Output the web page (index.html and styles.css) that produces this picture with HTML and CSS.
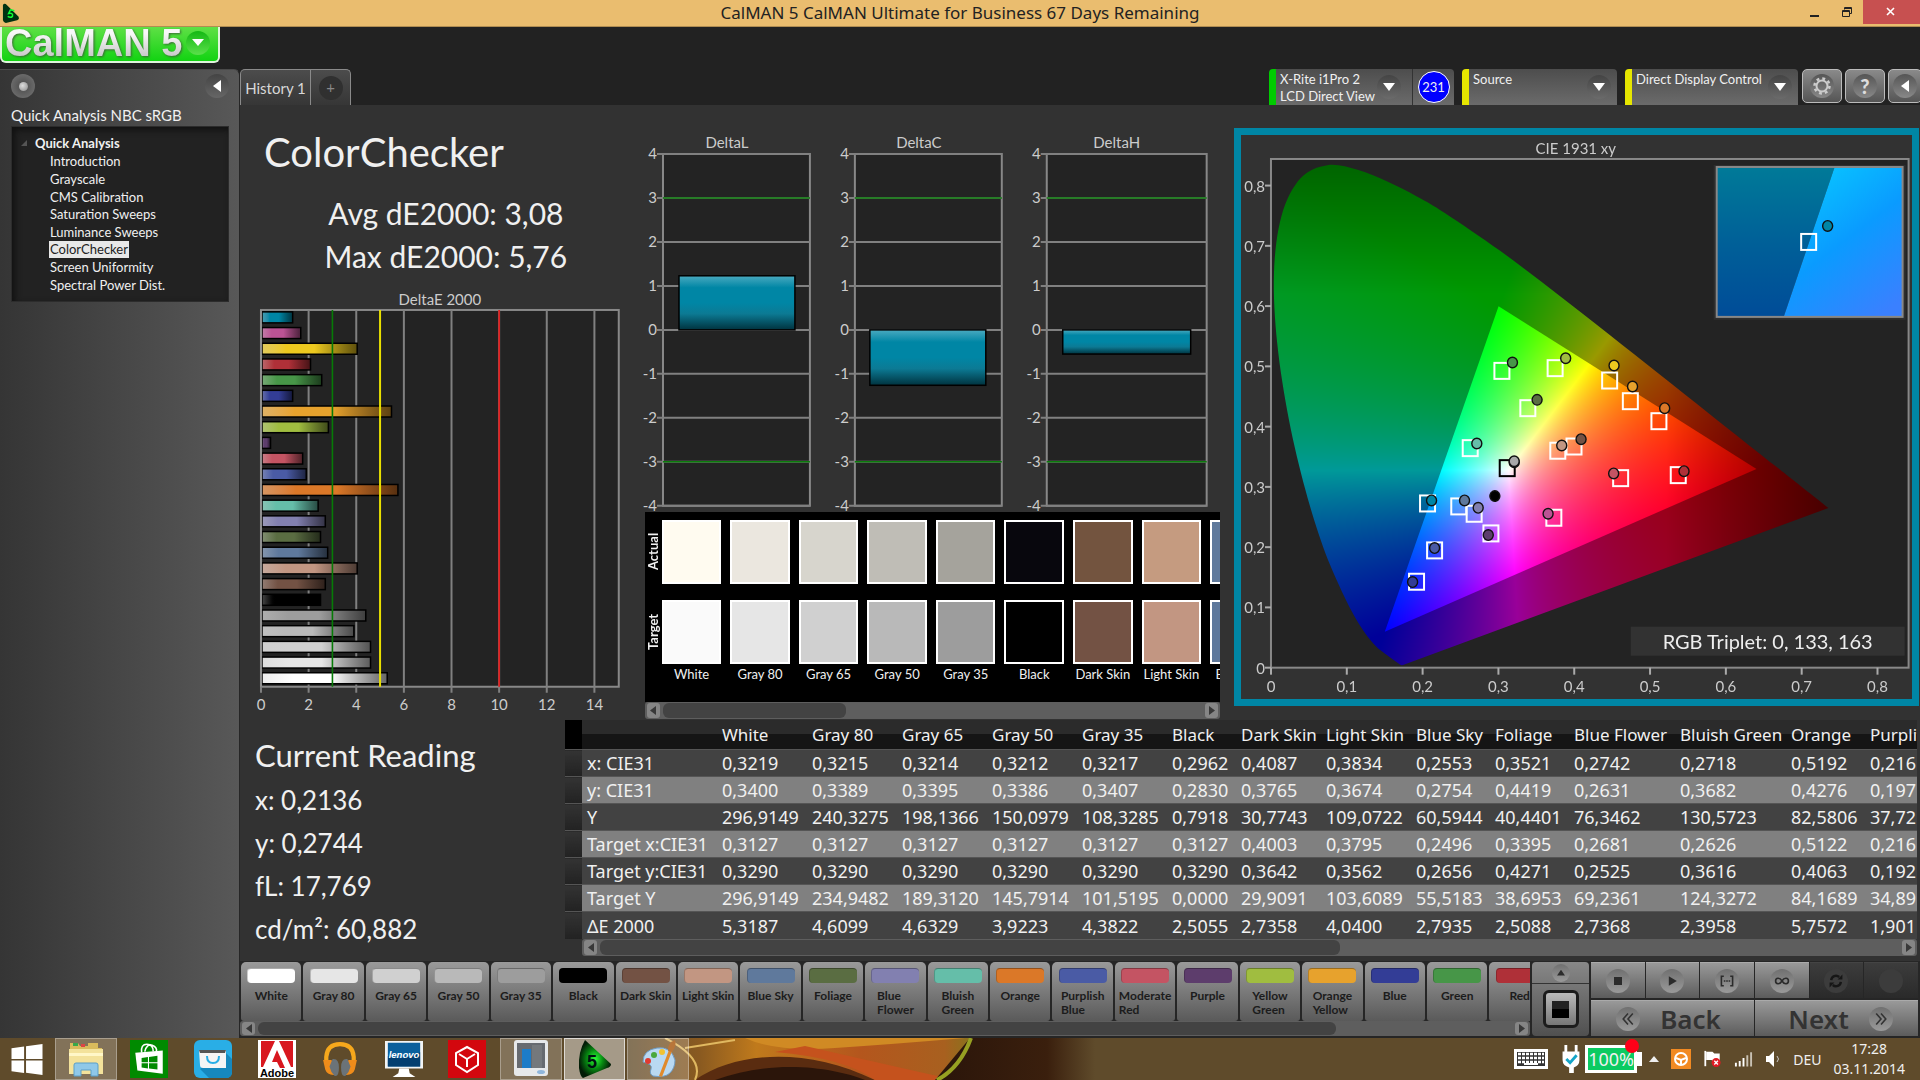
FILE: index.html
```html
<!DOCTYPE html>
<html lang="en">
<head>
<meta charset="utf-8">
<title>CalMAN 5</title>
<link rel="stylesheet" href="styles.css">
</head>
<body>
<header class="titlebar">
  <svg class="app-icon" viewBox="0 0 20 22"><path d="M1 2Q2 0 4 1L17 14Q19 17 16 18L4 21Q2 21 1 18Z" fill="#031"/><path d="M9 7L13 8M9 7L7 11Q12 10 11 14Q9 16 6 14" stroke="#1f3" stroke-width="1.6" fill="none"/></svg>
  <h1 class="window-title">CalMAN 5 CalMAN Ultimate for Business 67 Days Remaining</h1>
  <div class="window-buttons">
    <button class="win-btn" aria-label="Minimize"><svg viewBox="0 0 12 12"><path d="M1 9h9v2H1z" fill="#222"/></svg></button>
    <button class="win-btn" aria-label="Restore"><svg viewBox="0 0 12 12"><path d="M3.500 3.500V1.500h7v6h-2M1.500 4.500h7v6h-7z M1.500 5.500h7M3.500 2.500h7" stroke="#222" fill="none"/></svg></button>
    <button class="win-btn win-close" aria-label="Close"><svg viewBox="0 0 12 12"><path d="M2 2l7 7M9 2l-7 7" stroke="#fff" stroke-width="1.600"/></svg></button>
  </div>
</header>

<div class="brandbar">
  <button class="logo"><span class="logo-text">CalMAN 5</span><span class="logo-drop"><svg viewBox="0 0 12 8"><path d="M0 0h12L6 7z" fill="#fff"/></svg></span></button>
</div>

<div class="workspace">
  <aside class="sidebar">
    <div class="side-top">
      <button class="knob" aria-label="Record"><span class="knob-dot"></span></button>
      <button class="knob knob-dim" aria-label="Collapse"><svg viewBox="0 0 8 12"><path d="M8 0v12L0 6z" fill="#fff"/></svg></button>
    </div>
    <h2 class="side-title">Quick Analysis NBC sRGB</h2>
    <nav class="tree">
      <div class="tree-root"><svg viewBox="0 0 8 8"><path d="M8 0v8H0z" fill="#555"/></svg>Quick Analysis</div>
      <ul class="tree-list">
        <li><a href="#">Introduction</a></li>
        <li><a href="#">Grayscale</a></li>
        <li><a href="#">CMS Calibration</a></li>
        <li><a href="#">Saturation Sweeps</a></li>
        <li><a href="#">Luminance Sweeps</a></li>
        <li><a href="#" class="current">ColorChecker</a></li>
        <li><a href="#">Screen Uniformity</a></li>
        <li><a href="#">Spectral Power Dist.</a></li>
      </ul>
    </nav>
  </aside>

  <main class="main">
    <div class="toolbar">
      <div class="tabs">
        <button class="tab">History 1</button>
        <button class="tab tab-add" aria-label="Add history"><span>+</span></button>
      </div>
      <div class="devices">
        <button class="device green meter"><span class="device-text">X-Rite i1Pro 2<br>LCD Direct View</span><span class="drop"><svg viewBox="0 0 12 8"><path d="M0 0h12L6 8z" fill="#fff"/></svg></span><span class="count-cell"><span class="count">231</span></span></button>
        <button class="device source"><span class="device-text">Source</span><span class="drop"><svg viewBox="0 0 12 8"><path d="M0 0h12L6 8z" fill="#fff"/></svg></span></button>
        <button class="device display"><span class="device-text">Direct Display Control</span><span class="drop"><svg viewBox="0 0 12 8"><path d="M0 0h12L6 8z" fill="#fff"/></svg></span></button>
        <div class="tools">
          <button class="tool" aria-label="Settings"><span class="tool-disc"><svg viewBox="0 0 20 20"><circle cx="10" cy="10" r="5.500" fill="none" stroke="#ccc" stroke-width="2"/><circle cx="10" cy="10" r="7.500" fill="none" stroke="#ccc" stroke-width="2.500" stroke-dasharray="2.900 3"/></svg></span></button>
          <button class="tool" aria-label="Help"><span class="tool-disc">?</span></button>
          <button class="tool tool-cut" aria-label="Collapse panel"><span class="tool-disc"><svg class="tri" viewBox="0 0 8 12"><path d="M8 0v12L0 6z" fill="#fff"/></svg></span></button>
        </div>
      </div>
    </div>

    <div class="content">
      <section class="summary">
        <h2>ColorChecker</h2>
        <p class="stat">Avg dE2000: 3,08</p>
        <p class="stat">Max dE2000: 5,76</p>
        <svg id="delta-e" class="chart" viewBox="0 0 400 436"></svg>
      </section>

      <section class="middle">
        <svg id="deltas" class="chart" viewBox="0 0 595 384"></svg>
        <div class="compare">
          <div class="compare-body">
            <div class="compare-names"><span>Actual</span><span>Target</span></div>
            <div class="patches" id="patches"></div>
          </div>
          <div class="scrollbar">
            <button aria-label="Scroll left"><svg viewBox="0 0 8 12"><path d="M8 0v12L0 6z"/></svg></button>
            <div class="track"><div class="thumb" style="width:34%"></div></div>
            <button aria-label="Scroll right"><svg viewBox="0 0 8 12"><path d="M0 0v12L8 6z"/></svg></button>
          </div>
        </div>
      </section>

      <section class="cie">
        <canvas id="gamut" width="671" height="564"></canvas>
        <svg id="cie" class="chart" viewBox="0 0 671 564">
          <defs>
            <linearGradient id="ins-dim" x1="0" y1="0" x2="0" y2="1"><stop offset="0" stop-color="#007a98"/><stop offset=".5" stop-color="#006098"/><stop offset="1" stop-color="#004c98"/></linearGradient>
            <linearGradient id="ins-lit" x1=".2" y1="0" x2=".8" y2="1"><stop offset="0" stop-color="#08c8ff"/><stop offset=".5" stop-color="#0a9bff"/><stop offset="1" stop-color="#3a80ff"/></linearGradient>
          </defs>
        </svg>
      </section>
    </div>

    <div class="results">
      <section class="reading">
        <h2>Current Reading</h2>
        <p>x: 0,2136</p>
        <p>y: 0,2744</p>
        <p>fL: 17,769</p>
        <p>cd/m²: 60,882</p>
      </section>
      <div class="table-wrap">
        <div class="table-clip">
          <table class="data">
            <colgroup><col class="w-mark"><col class="w-label"><col class="w-gray"><col class="w-gray"><col class="w-gray"><col class="w-gray"><col class="w-gray"><col class="w-black"><col class="w-dark"><col class="w-gray"><col class="w-std"><col class="w-std"><col class="w-flower"><col class="w-bluish"><col class="w-std"><col class="w-gray"></colgroup>
            <thead><tr><th class="mark"></th><th></th><th>White</th><th>Gray 80</th><th>Gray 65</th><th>Gray 50</th><th>Gray 35</th><th>Black</th><th>Dark Skin</th><th>Light Skin</th><th>Blue Sky</th><th>Foliage</th><th>Blue Flower</th><th>Bluish Green</th><th>Orange</th><th>Purplish</th></tr></thead>
            <tbody>
            <tr><td class="mark"></td><th>x: CIE31</th><td>0,3219</td><td>0,3215</td><td>0,3214</td><td>0,3212</td><td>0,3217</td><td>0,2962</td><td>0,4087</td><td>0,3834</td><td>0,2553</td><td>0,3521</td><td>0,2742</td><td>0,2718</td><td>0,5192</td><td>0,216</td></tr>
            <tr><td class="mark"></td><th>y: CIE31</th><td>0,3400</td><td>0,3389</td><td>0,3395</td><td>0,3386</td><td>0,3407</td><td>0,2830</td><td>0,3765</td><td>0,3674</td><td>0,2754</td><td>0,4419</td><td>0,2631</td><td>0,3682</td><td>0,4276</td><td>0,197</td></tr>
            <tr><td class="mark"></td><th>Y</th><td>296,9149</td><td>240,3275</td><td>198,1366</td><td>150,0979</td><td>108,3285</td><td>0,7918</td><td>30,7743</td><td>109,0722</td><td>60,5944</td><td>40,4401</td><td>76,3462</td><td>130,5723</td><td>82,5806</td><td>37,72</td></tr>
            <tr><td class="mark"></td><th>Target x:CIE31</th><td>0,3127</td><td>0,3127</td><td>0,3127</td><td>0,3127</td><td>0,3127</td><td>0,3127</td><td>0,4003</td><td>0,3795</td><td>0,2496</td><td>0,3395</td><td>0,2681</td><td>0,2626</td><td>0,5122</td><td>0,216</td></tr>
            <tr><td class="mark"></td><th>Target y:CIE31</th><td>0,3290</td><td>0,3290</td><td>0,3290</td><td>0,3290</td><td>0,3290</td><td>0,3290</td><td>0,3642</td><td>0,3562</td><td>0,2656</td><td>0,4271</td><td>0,2525</td><td>0,3616</td><td>0,4063</td><td>0,192</td></tr>
            <tr><td class="mark"></td><th>Target Y</th><td>296,9149</td><td>234,9482</td><td>189,3120</td><td>145,7914</td><td>101,5195</td><td>0,0000</td><td>29,9091</td><td>103,6089</td><td>55,5183</td><td>38,6953</td><td>69,2361</td><td>124,3272</td><td>84,1689</td><td>34,89</td></tr>
            <tr><td class="mark"></td><th>ΔE 2000</th><td>5,3187</td><td>4,6099</td><td>4,6329</td><td>3,9223</td><td>4,3822</td><td>2,5055</td><td>2,7358</td><td>4,0400</td><td>2,7935</td><td>2,5088</td><td>2,7368</td><td>2,3958</td><td>5,7572</td><td>1,901</td></tr>
            </tbody>
          </table>
        </div>
        <div class="scrollbar table-scroll">
          <button aria-label="Scroll left"><svg viewBox="0 0 8 12"><path d="M8 0v12L0 6z"/></svg></button>
          <div class="track"><div class="thumb" style="width:57%"></div></div>
          <button aria-label="Scroll right"><svg viewBox="0 0 8 12"><path d="M0 0v12L8 6z"/></svg></button>
        </div>
      </div>
    </div>

    <footer class="dock">
      <div class="tiles-wrap">
        <div class="tiles" id="tiles"></div>
        <div class="scrollbar">
          <button aria-label="Scroll left"><svg viewBox="0 0 8 12"><path d="M8 0v12L0 6z"/></svg></button>
          <div class="track"><div class="thumb" style="width:86%"></div></div>
          <button aria-label="Scroll right"><svg viewBox="0 0 8 12"><path d="M0 0v12L8 6z"/></svg></button>
        </div>
      </div>
      <div class="pattern">
        <button class="up" aria-label="Expand"><span class="disc"><svg viewBox="0 0 20 20"><path d="M5 13h10l-5-7z"/></svg></span></button>
        <button class="window-size" aria-label="Pattern window"><span></span></button>
      </div>
      <div class="controls">
        <div class="transport">
          <button aria-label="Stop"><span class="disc"><svg viewBox="0 0 20 20"><path d="M5 5h10v10H5z"/></svg></span></button>
          <button aria-label="Read"><span class="disc"><svg viewBox="0 0 20 20"><path d="M6 4v12l10-6z"/></svg></span></button>
          <button aria-label="Read series"><span class="disc"><svg viewBox="0 0 20 20"><path d="M6 4H3v12h3M14 4h3v12h-3M6 10h2M9 10h2M12 10h2" fill="none" stroke="#2b2b2b" stroke-width="2"/></svg></span></button>
          <button aria-label="Read continuously"><span class="disc"><svg viewBox="0 0 20 20"><path d="M10 10C7 5 2 6 2 10s5 5 8 0s8-4 8 0s-5 5-8 0z" fill="none" stroke="#2b2b2b" stroke-width="2"/></svg></span></button>
          <button class="off" aria-label="Refresh"><span class="disc"><svg viewBox="0 0 20 20"><path d="M4 9a6 6 0 0 1 10-4M16 11a6 6 0 0 1-10 4" fill="none" stroke="#161616" stroke-width="3"/><path d="M12 8h6V2zM8 12H2v6z" fill="#161616"/></svg></span></button>
          <button class="off" aria-label="Unused"><span class="disc"></span></button>
        </div>
        <div class="steps">
          <button><span class="disc big"><svg viewBox="0 0 20 20"><path d="M10 3l-6 7 6 7M16 3l-6 7 6 7" fill="none" stroke="#333" stroke-width="2"/></svg></span>Back</button>
          <button class="next">Next<span class="disc big"><svg viewBox="0 0 20 20"><path d="M4 3l6 7-6 7M10 3l6 7-6 7" fill="none" stroke="#333" stroke-width="2"/></svg></span></button>
        </div>
      </div>
    </footer>
  </main>
</div>

<div class="taskbar">
  <svg class="wallpaper" viewBox="0 0 470 42" preserveAspectRatio="none">
    <defs>
      <linearGradient id="petal"><stop offset="0" stop-color="#5f4b2b"/><stop offset=".16" stop-color="#8a5a20"/><stop offset=".28" stop-color="#c07a1c"/><stop offset=".5" stop-color="#b4561d"/><stop offset=".68" stop-color="#a8601f"/><stop offset=".76" stop-color="#7d7a1c"/><stop offset=".8" stop-color="#47290f"/><stop offset="1" stop-color="#5f4b2b"/></linearGradient>
      <linearGradient id="dusk"><stop offset="0" stop-color="#2a150a"/><stop offset=".7" stop-color="#3a1f0d"/><stop offset="1" stop-color="#5f4b2b"/></linearGradient>
    </defs>
    <path d="M0 0h470v42H0z" fill="url(#petal)"/>
    <path d="M70 42C110 14 180 8 250 42z" fill="#5a2c10"/>
    <path d="M90 42C150 20 210 30 240 42z" fill="#2b150a"/>
    <path d="M120 0Q150 14 210 10T340 0z" fill="#d08a24"/>
    <path d="M180 8Q250 24 330 42H250Q220 20 150 14z" fill="#c5521d"/>
    <path d="M345 0L310 42H470V0z" fill="url(#dusk)"/>
    <path d="M346 0Q335 30 312 42" stroke="#97a022" stroke-width="4" fill="none"/>
    <path d="M40 0Q80 20 70 42M60 10L110 2" stroke="#e0b860" stroke-width="2" fill="none"/>
  </svg>
  <div class="apps">
    <button class="start" aria-label="Start"><svg viewBox="0 0 32 32"><path d="M0 4.500l13-2v13H0zM15 2.200L32 0v15.500H15zM0 17h13v13L0 28zM15 17h17v15l-17-2.300z" fill="#fff"/></svg></button>
    <div class="app-row">
    <button class="app open" aria-label="Explorer"><svg viewBox="0 0 38 36"><path d="M3 6V2h8l2 3h8V2h10v5h4v26H3z" fill="#d9bb5c"/><path d="M2 8h34v25H2z" fill="#f3e29b"/><path d="M2 12h34v3H2z" fill="#fff7c8"/><path d="M6 2h5v3H6z" fill="#38a84a"/><path d="M14 3h4v3h-4z" fill="#d44"/><path d="M7 35V24q0-2 2-2h20q2 0 2 2v11h-7v-6H14v6z" fill="#8fc8e8" stroke="#5a9fc8"/></svg></button>
    <button class="app" aria-label="Store"><svg viewBox="0 0 36 36"><path d="M0 0h36v36H0z" fill="#008a00"/><path d="M5 12l26-2v22L7 29z" fill="#fff"/><path d="M11 12Q10 4 16 4t6 7M14 11Q16 3 21 5t4 6" fill="none" stroke="#fff" stroke-width="1.500"/><path d="M11 17l6-1v5h-6zM18 16l8-1v6h-8zM11 22h6v5l-6-1zM18 22h8v6l-8-1z" fill="#008a00"/></svg></button>
    <button class="app" aria-label="Shop"><svg viewBox="0 0 38 38"><rect width="38" height="38" rx="6" fill="#29aee6"/><path d="M6 29L29 10l9 9v13q0 6-6 6H15z" fill="#1688bd"/><path d="M5 10h27v18H9q-3 0-3-3z" fill="#f5f5f5"/><path d="M5 10h27l-1 3H6z" fill="#555"/><path d="M13 16q0 7 6 7t6-7" fill="none" stroke="#29aee6" stroke-width="2"/></svg></button>
    <button class="app" aria-label="Adobe"><svg viewBox="0 0 38 38"><path d="M0 0h38v38H0z" fill="#fff"/><path d="M3 1h14L5 27H3zM21 1h14v26h-2zM19 10l8 18h-5l-3-6h-5z" fill="#d8171f"/><text x="19" y="37" text-anchor="middle" font-size="11" font-weight="700" font-family="Liberation Sans,sans-serif">Adobe</text></svg></button>
    <button class="app" aria-label="Music"><svg viewBox="0 0 36 36"><path d="M5 22V16Q6 4 18 4T31 16v6" fill="none" stroke="#f6a81c" stroke-width="4"/><path d="M2 19h8l4 14q-8 1-10-5zM34 19h-8l-4 14q8 1 10-5z" fill="#f08c1a"/><path d="M11 18q6-1 6 8t-4 8q-4-4-5-9zM25 18q-6-1-6 8t4 8q4-4 5-9z" fill="#6b7378"/></svg></button>
    <button class="app" aria-label="Lenovo"><svg viewBox="0 0 40 38"><path d="M0 0h40v29H0z" fill="#f2f4f5"/><path d="M3 2h34v25H3z" fill="#0a5f9c"/><path d="M3 16Q20 22 37 12v15H3z" fill="#033e70"/><path d="M15 29h10l1 5 6 4H8l6-4z" fill="#fff"/><text x="20" y="18" text-anchor="middle" font-size="10" font-style="italic" font-weight="700" fill="#fff" font-family="Liberation Sans,sans-serif">lenovo</text></svg></button>
    <button class="app" aria-label="Cube"><svg viewBox="0 0 38 38"><path d="M0 0h38v38H0z" fill="#d3070e"/><path d="M19 7l11 6v12l-11 7-11-7V13zM19 19v8M19 19l-8-5M19 19l8-5" fill="none" stroke="#fff" stroke-width="2"/></svg></button>
    <button class="app open" aria-label="Computer"><svg viewBox="0 0 36 38"><rect x="1" width="34" height="36" rx="3" fill="#e6e8ea"/><path d="M4 3h28v25H4z" fill="#666a70"/><path d="M9 9h9v19H9z" fill="#1c7cc8"/><path d="M19 5h10v23H19z" fill="#74787c"/><ellipse cx="28" cy="32" rx="4" ry="2" fill="#8fb6dc"/></svg></button>
    <button class="app active" aria-label="CalMAN"><svg viewBox="0 0 36 38"><defs><radialGradient id="glow"><stop offset="0" stop-color="#2dff36"/><stop offset=".5" stop-color="#078a12"/><stop offset="1" stop-color="#021c06"/></radialGradient></defs><path d="M8 0L34 24Q34 27 30 28L6 38Q3 36 2 28Q1 12 8 0z" fill="url(#glow)"/><text x="15" y="28" text-anchor="middle" font-size="18" font-weight="700" font-family="Liberation Sans,sans-serif" fill="#011">5</text></svg></button>
    <button class="app open" aria-label="Paint"><svg viewBox="0 0 38 38"><path d="M4 22Q4 10 18 8T36 20Q36 28 31 33T14 36Q10 34 12 29T4 22z" fill="#b9d9f2" stroke="#6e9cc4"/><circle cx="9" cy="21" r="3" fill="#e03a30"/><circle cx="15" cy="15" r="3" fill="#4aa83c"/><circle cx="23" cy="12" r="3" fill="#f1c232"/><path d="M20 36L30 10l3 1-10 26z" fill="#e08a2c"/><path d="M29 11Q28 3 36 0q2 6-3 12z" fill="#b8763a"/></svg></button>
    </div>
  </div>
  <div class="tray">
    <svg class="keyboard" viewBox="0 0 36 22"><path d="M1 1h34v20H1z" fill="#fff"/><path d="M4 4h28v14H4z" fill="#333"/><path d="M5 6h26M5 10h26M5 14h26" stroke="#fff" stroke-width="2.500" stroke-dasharray="3 1"/><path d="M11 16h14" stroke="#fff" stroke-width="2"/></svg>
    <svg class="plug" viewBox="0 0 20 32"><path d="M3 1h3v7h8V1h3v7h2v9q0 6-6 8v6H8v-6q-7-2-7-8V8h2z" fill="#fff"/><path d="M5 16l4 4 7-8" fill="none" stroke="#14a5c8" stroke-width="3"/></svg>
    <div class="battery"><span>100%</span></div>
    <svg class="chev" viewBox="0 0 10 6"><path d="M5 0l5 6H0z" fill="#eee"/></svg>
    <svg class="wheel" viewBox="0 0 20 20"><path d="M0 0h20v20H0z" fill="#f28a22"/><circle cx="10" cy="10" r="6" fill="none" stroke="#fff" stroke-width="2"/><path d="M5 9l5 2 5-2M10 11v5" stroke="#fff" stroke-width="2" fill="none"/></svg>
    <svg class="flag" viewBox="0 0 20 20"><path d="M2 1v17" stroke="#fff" stroke-width="2"/><path d="M3 2h7l2 2h6v9h-7l-2-2H3z" fill="#fff"/><circle cx="14" cy="14" r="5" fill="#e01b24"/><path d="M12 12l4 4M16 12l-4 4" stroke="#fff" stroke-width="1.500"/></svg>
    <svg class="signal" viewBox="0 0 20 16"><path d="M1 12h2v4H1zM5 10h2v6H5zM9 7h2v9H9z" fill="#fff"/><path d="M13 4h2v12h-2zM17 1h2v15h-2z" fill="#c9c1b3"/></svg>
    <svg class="speaker" viewBox="0 0 16 18"><path d="M1 6h3l5-5v16l-5-5H1z" fill="#fff"/><path d="M12 6q3 3 0 6" stroke="#ccc" fill="none"/></svg>
    <span class="lang">DEU</span>
    <div class="clock"><span>17:28</span><span>03.11.2014</span></div>
  </div>
</div>
<script src="charts.js"></script>
</body>
</html>
```
FILE: styles.css
```css
* { box-sizing: border-box; }
body { margin: 0; min-height: 100vh; display: flex; flex-direction: column; background: #222; color: #f0f0f0; font-family: Lato, "Noto Sans", sans-serif; font-size: 14px; overflow-x: hidden; }
button { font: inherit; color: inherit; border: 0; padding: 0; margin: 0; background: none; }
h1, h2, p, ul { margin: 0; padding: 0; font-weight: 400; }
svg { display: block; }

/* window frame */
.titlebar { height: 27px; display: flex; align-items: center; background: #eabd6f; border-bottom: 1px solid #b08d52; justify-content: space-between; padding-left: 2px; }
.app-icon { width: 19px; height: 21px; }
.window-title { font: 17px/28px "Noto Sans", sans-serif; color: #222; }
.window-buttons { display: flex; align-self: flex-start; }
.titlebar > .app-icon { margin-right: 100px; }
.win-btn { width: 32px; height: 24px; display: grid; place-items: center; }
.win-btn svg { width: 12px; height: 12px; }
.win-close { width: 57px; background: #c75050; }
.brandbar { height: 42px; background: #222; }
.logo { width: 220px; height: 36px; display: flex; align-items: center; justify-content: space-between; padding: 0 8px 2px 3px; border: 2px solid #dff5dc; border-top: 0; border-radius: 0 0 6px 6px; background: linear-gradient(#5fe046, #12d312); }
.logo-text { font: bold 38px/32px "Liberation Sans", sans-serif; background: linear-gradient(#f8f8f8 20%, #c4c4c4); -webkit-background-clip: text; background-clip: text; color: transparent; filter: drop-shadow(1px 1px 1px #3a6a35); }
.logo-drop { width: 24px; height: 24px; border-radius: 50%; display: grid; place-items: center; background: linear-gradient(#14b814, #5ae04a); }
.logo-drop svg { width: 12px; height: 8px; }

.workspace { flex: 1; display: flex; }
.sidebar { width: 240px; flex: none; padding: 4px 10px 0 11px; background: linear-gradient(90deg, #353535, #585858); border-right: 1px solid #262626; border-top: 1px solid #4a4a4a; border-top-right-radius: 6px; }
.side-top { display: flex; justify-content: space-between; }
.knob { width: 24px; height: 24px; border-radius: 50%; display: grid; place-items: center; background: radial-gradient(#4a4a4a, #777); }
.knob-dim { background: linear-gradient(#444, #666); }
.knob svg { width: 8px; height: 12px; }
.knob-dot { width: 9px; height: 9px; border-radius: 50%; background: radial-gradient(circle at 40% 40%, #ddd, #888); }
.side-title { font-size: 15px; line-height: 20px; margin: 7px 0 1px; white-space: nowrap; }
.tree { height: 176px; background: #222; border: 1px solid #2c2c2c; box-shadow: inset 3px 3px 6px #111; padding: 7px 0 0 9px; }
.tree-root { display: flex; align-items: center; gap: 8px; font-weight: 700; font-size: 13px; line-height: 18px; }
.tree-root svg { width: 6px; height: 6px; }
.tree-list { list-style: none; height: 141px; display: grid; grid-template-rows: repeat(8, 1fr); padding-left: 28px; margin-top: 1px; }
.tree-list li { display: flex; align-items: center; min-height: 0; }
.tree-list a { color: #f0f0f0; text-decoration: none; font-size: 13px; line-height: 17px; padding: 0 1px; }
.tree-list .current { background: #e8e8e8; color: #222; }

.main { flex: 1; min-width: 0; display: flex; flex-direction: column; background: #323232; }
.toolbar { height: 36px; display: flex; justify-content: space-between; background: #222; }
.tabs { display: flex; }
.tab { font-size: 15px; color: #d8d8d8; background: linear-gradient(#4c4c4c, #363636); border: 1px solid #8a8a8a; border-bottom: 0; border-radius: 5px 0 0 0; width: 71px; white-space: nowrap; }
.tab-add { width: 40px; border-left: 0; border-radius: 0 5px 0 0; display: grid; place-items: center; color: #888; }
.tab-add span { width: 24px; height: 24px; border-radius: 50%; background: #303030; line-height: 23px; }
.devices { display: flex; }
.device { display: flex; align-items: flex-start; text-align: left; line-height: 17px; background: linear-gradient(#4d4d4d, #6b6b6b); border-left: 7px solid #e6e600; border-radius: 4px 4px 0 0; padding-left: 4px; white-space: nowrap; }
.device.green { border-left-color: #0c0; }
.meter { width: 185px; margin-right: 8px; }
.source { width: 155px; margin-right: 8px; }
.display { width: 173px; margin-right: 4px; }
.device-text { flex: 1; padding-top: 2px; font-size: 13px; }
.drop { width: 24px; height: 24px; border-radius: 50%; display: grid; place-items: center; background: linear-gradient(#444, #6b6b6b); margin: 6px 6px 0 0; flex: none; }
.display .drop { margin-left: -4px; }
.drop svg { width: 12px; height: 8px; }
.count-cell { align-self: stretch; width: 42px; border-left: 1px solid #333; display: grid; place-items: center; margin-left: 5px; }
.count { width: 32px; height: 32px; border-radius: 50%; border: 1px solid #fff; background: #00f; font-size: 13px; line-height: 30px; text-align: center; }
.tools { display: flex; gap: 3px; width: 118px; overflow: hidden; }
.tool { width: 40px; height: 34px; flex: none; border: 1px solid #bbb; border-radius: 5px; background: linear-gradient(#8a8a8a, #555); display: grid; place-items: center; }
.tool-cut { width: 34px; }
.tool-disc { width: 24px; height: 24px; border-radius: 50%; background: linear-gradient(#555, #888); display: grid; place-items: center; font-size: 20px; line-height: 24px; font-weight: 900; color: #ddd; }
.tool-disc svg { width: 20px; height: 20px; }
.tool-disc .tri { width: 8px; height: 12px; }

.content { display: grid; grid-template-columns: 400fr 595fr 685fr; padding-right: 1px; }
.chart { width: 100%; height: auto; font-family: Lato, sans-serif; font-size: 15px; fill: #ccc; overflow: visible; }
.summary h2 { font-size: 40px; line-height: 46px; padding: 24px 0 0 24px; }
.stat { font-size: 30px; line-height: 43px; text-align: center; padding-left: 12px; }
.summary h2 + .stat { margin-top: 17px; }
.summary .chart { margin-top: 1px; }
.middle { padding-top: 23px; }
.compare { margin: 0 14px 0 5px; }
.compare-body { display: flex; background: #000; height: 190px; padding-top: 8px; }
.compare-names { width: 16px; display: flex; flex-direction: column; font-size: 13px; font-weight: 700; line-height: 16px; gap: 17px; }
.compare-names span { writing-mode: vertical-rl; transform: rotate(180deg); height: 63px; text-align: center; }
.patches { flex: 1; display: grid; grid-auto-flow: column; grid-auto-columns: 12.250%; overflow: hidden; align-content: start; }
.patch { text-align: center; font-size: 13px; white-space: nowrap; }
.patch i { display: block; height: 64px; border: 2px solid #fff; margin: 0 8px 16px 1px; }
.patch i + i { margin-bottom: 0; }
.patch span { display: block; margin: 0 -4px 0 -11px; line-height: 20px; }
.scrollbar { display: flex; align-items: center; height: 17px; background: #5e5e5e; gap: 3px; padding: 1px 2px; border-radius: 3px; }
.scrollbar button { width: 13px; align-self: stretch; background: #858585; border-radius: 3px; display: grid; place-items: center; flex: none; }
.scrollbar svg { width: 6px; height: 11px; fill: #383838; }
.track { flex: 1; align-self: stretch; }
.thumb { height: 100%; background: #434343; border-radius: 6px; }
.cie { position: relative; border: 7px solid #0086a5; margin-top: 23px; align-self: start; }
.cie canvas { position: absolute; inset: 0; width: 100%; height: 100%; }
.cie .chart { position: relative; }

.results { display: flex; padding-right: 3px; margin-top: 1px; }
.reading { width: 325px; flex: none; padding: 14px 0 0 15px; }
.reading h2 { font-size: 31px; line-height: 43px; }
.reading p { font-size: 26px; line-height: 43px; }
.reading h2 + p { margin-top: 2px; }
.table-wrap { flex: 1; min-width: 0; }
.table-clip { overflow: hidden; }
.data { table-layout: fixed; width: 1390px; border-collapse: collapse; font-family: "Noto Sans", sans-serif; font-size: 18px; text-align: left; }
.data th { font-weight: 400; }
.data th, .data td { padding: 0 0 0 5px; height: 27px; line-height: 26px; white-space: nowrap; border-top: 1px solid #555; }
.data thead th { height: 30px; font-size: 17px; line-height: 28px; border: 0; background: linear-gradient(#2b2b2b 50%, #151515 50%); }
.data tbody tr { background: #424242; }
.data tbody tr:nth-child(even) { background: #808080; }
.data .mark { background: linear-gradient(#333, #222); padding: 0; }
.data thead .mark { background: #000; }
.w-mark { width: 17px; } .w-label { width: 135px; } .w-gray { width: 90px; } .w-black { width: 69px; }
.w-dark { width: 85px; } .w-std { width: 79px; } .w-flower { width: 106px; } .w-bluish { width: 111px; }
.table-scroll { margin-left: 17px; }

.dock { display: flex; margin-top: auto; height: 77px; padding: 1px 2px 2px 0; background: #262626; gap: 2px; }
.tiles-wrap { flex: 1; min-width: 0; display: flex; flex-direction: column; justify-content: space-between; }
.tiles { display: grid; grid-auto-flow: column; grid-auto-columns: 4.840%; overflow: hidden; height: 59px; }
.tile { display: flex; flex-direction: column; align-items: center; gap: 6px; background: linear-gradient(#9a9a9a, #5a5a5a); border-radius: 5px 5px 3px 3px; margin: 0 1px; padding-top: 6px; color: #1c1c1c; font-weight: 700; font-size: 12px; line-height: 14px; text-align: left; }
.tile i { width: 48px; height: 15px; border-radius: 4px; border-top: 1px solid #0005; border-left: 1px solid #0003; }
.tile span { white-space: nowrap; }
.dock .scrollbar { height: 15px; }
.pattern { width: 57px; display: flex; flex-direction: column; border-radius: 4px; overflow: hidden; background: linear-gradient(#888, #505050); }
.up { height: 22px; border-bottom: 1px solid #333; display: grid; place-items: center; }
.disc { width: 24px; height: 24px; border-radius: 50%; display: grid; place-items: center; background: linear-gradient(#707070, #9a9a9a); }
.disc svg { width: 16px; height: 16px; fill: #2b2b2b; }
.up .disc { width: 18px; height: 18px; }
.window-size { width: 36px; height: 38px; margin: 6px auto; border: 3px solid #1c1c1c; border-radius: 6px; background: linear-gradient(#bbb, #777); display: grid; place-items: center; }
.window-size span { width: 17px; height: 17px; background: linear-gradient(#222 50%, #000 50%); }
.controls { width: 327px; display: flex; flex-direction: column; gap: 2px; }
.transport, .steps { flex: 1; display: grid; grid-template-columns: repeat(6, 1fr); gap: 1px; }
.transport button, .steps button { background: linear-gradient(#999, #5c5c5c); border-top: 1px solid #aaa; display: grid; place-items: center; }
.transport .off { background: linear-gradient(#3c3c3c, #2a2a2a); border-top-color: #444; }
.off .disc { background: #3c3c3c; }
.steps { grid-template-columns: 1fr 1fr; }
.steps button { display: flex; align-items: center; justify-content: center; gap: 20px; font: 600 26px/32px "Noto Sans", sans-serif; color: #333; padding-right: 8px; }
.steps .next { padding: 0 0 0 8px; }

.taskbar { height: 42px; display: flex; justify-content: space-between; background: #5f4b2b; position: relative; overflow: hidden; }
.wallpaper { position: absolute; left: 625px; width: 470px; height: 42px; }
.apps, .tray { position: relative; display: flex; align-items: center; }
.apps { gap: 2px; }
.app-row { display: grid; grid-template-columns: repeat(10, 1fr); column-gap: 2px; width: 634px; }
.start { width: 53px; display: grid; place-items: center; }
.start svg { width: 32px; height: 31px; }
.app { height: 42px; display: grid; place-items: center; border: 1px solid transparent; }
.app svg { width: 38px; height: 38px; }
.app.open { background: #ffffff38; border-color: #ffffff50; }
.app.active { background: #ffffff70; border-color: #ffffffa0; }
.tray { gap: 12px; padding-right: 15px; font-family: "Noto Sans", sans-serif; }
.keyboard { width: 36px; height: 22px; }
.plug { width: 20px; height: 30px; }
.battery { width: 52px; height: 28px; border: 3px solid #fff; background: #0bcb62; position: relative; font-size: 18px; line-height: 22px; text-align: center; margin-left: -8px; }
.battery::before { content: ""; position: absolute; right: -8px; top: 4px; width: 5px; height: 14px; background: #fff; }
.battery::after { content: ""; position: absolute; right: -5px; top: -9px; width: 14px; height: 14px; border-radius: 50%; background: #ff0018; }
.chev { width: 10px; height: 6px; }
.wheel { width: 20px; height: 20px; }
.flag, .signal { width: 19px; height: 18px; }
.speaker { width: 16px; height: 18px; }
.lang { font-size: 14px; }
.clock { display: flex; flex-direction: column; align-items: center; font-size: 14px; line-height: 20px; }
```
FILE: charts.js
```js
const NS = 'http://www.w3.org/2000/svg';
function add(parent, tag, attrs, text) {
  const el = document.createElementNS(NS, tag);
  for (const k in attrs) el.setAttribute(k, attrs[k]);
  if (text !== undefined) el.textContent = text;
  parent.appendChild(el);
  return el;
}
const line = (s, x1, y1, x2, y2, c, w) => add(s, 'path', { d: `M${x1} ${y1}L${x2} ${y2}`, stroke: c, 'stroke-width': w || 2, fill: 'none' });

const patches = [
  ['White', '#fafafa', '#fffbf0'], ['Gray 80', '#e6e6e6', '#ebe7df'], ['Gray 65', '#d0d0d0', '#d7d5cd'],
  ['Gray 50', '#b9b9b9', '#bfbdb6'], ['Gray 35', '#9d9d9d', '#a5a39c'], ['Black', '#000000', '#08070d'],
  ['Dark Skin', '#735244', '#73543f'], ['Light Skin', '#c29682', '#c59b80'], ['Blue Sky', '#5f799c', '#607a9c'],
  ['Foliage', '#5a6d42'], ['Blue<br>Flower', '#8280b0'], ['Bluish<br>Green', '#65bea9'], ['Orange', '#db7828'],
  ['Purplish<br>Blue', '#4a5ba5'], ['Moderate<br>Red', '#c45463'], ['Purple', '#5d3d6c'],
  ['Yellow<br>Green', '#a0bd40'], ['Orange<br>Yellow', '#e7a22d'], ['Blue', '#333d96'], ['Green', '#479648'],
  ['Red', '#af3038'], ['Yellow', '#edc91f'], ['Magenta', '#bb5394'], ['Cyan', '#0086a5']
];
const deltaE = [5.3, 4.6, 4.6, 3.9, 4.4, 2.5, 2.7, 4.04, 2.8, 2.5, 2.7, 2.4, 5.75, 1.9, 1.75, .4, 2.83, 5.48, 1.33, 2.55, 2.08, 4.04, 1.67, 1.33];

/* DeltaE bars */
(() => {
  const s = document.getElementById('delta-e'), x0 = 21, top = 31, bottom = 408, u = 23.83;
  const defs = add(s, 'defs', {});
  add(s, 'rect', { x: x0, y: top, width: 358, height: bottom - top, fill: '#232323', stroke: '#888', 'stroke-width': 2 });
  add(s, 'text', { x: 200, y: 26, 'text-anchor': 'middle' }, 'DeltaE 2000');
  for (let v = 0; v <= 14; v += 2) {
    line(s, x0 + v * u, top, x0 + v * u, bottom + 6, '#808080');
    add(s, 'text', { x: x0 + v * u, y: 431, 'text-anchor': 'middle' }, v);
  }
  deltaE.forEach((v, i) => {
    const c = i ? patches[i][1] : '#ffffff';
    const g = add(defs, 'linearGradient', { id: 'g' + i });
    add(g, 'stop', { offset: 0, 'stop-color': `color-mix(in srgb, ${c} 65%, #ccc)` });
    add(g, 'stop', { offset: .25, 'stop-color': c });
    add(g, 'stop', { offset: .55, 'stop-color': c });
    add(g, 'stop', { offset: 1, 'stop-color': `color-mix(in srgb, ${c} 40%, #000)` });
    add(s, 'rect', { x: x0 + 1, y: 394 - i * 15.7, width: v * u - 1, height: 11, fill: `url(#g${i})`, stroke: '#000', 'stroke-width': 1.5 });
  });
  line(s, x0, top, x0, bottom, '#909090');
  line(s, x0 + 3 * u, top, x0 + 3 * u, bottom, '#067a06', 1.6);
  line(s, x0 + 5 * u, top, x0 + 5 * u, bottom, '#e8e000');
  line(s, x0 + 10 * u, top, x0 + 10 * u, bottom, '#e81818', 1.6);
})();

/* DeltaL, DeltaC, DeltaH */
(() => {
  const s = document.getElementById('deltas'), top = 26, u = 44;
  const g = add(add(s, 'defs', {}), 'linearGradient', { id: 'teal', x1: 0, y1: 0, x2: 0, y2: 1 });
  [[0, '#4aaac0'], [.22, '#0086a5'], [.5, '#0086a5'], [.7, '#0c7a94'], [1, '#00323e']].forEach(p => add(g, 'stop', { offset: p[0], 'stop-color': p[1] }));
  [['DeltaL', 23, 147, 87, 39, 116, 1.23], ['DeltaC', 215, 147, 279, 230, 116, -1.26], ['DeltaH', 407, 160, 477, 423, 128, -.55]].forEach(([name, x, w, tx, bx, bw, val]) => {
    add(s, 'text', { x: tx, y: 20, 'text-anchor': 'middle' }, name);
    add(s, 'rect', { x, y: top, width: w, height: 8 * u, fill: '#232323', stroke: '#888', 'stroke-width': 2 });
    for (let v = 4; v >= -4; v--) {
      const y = top + (4 - v) * u;
      line(s, x - 6, y, x + w, y, '#808080');
      if (Math.abs(v) === 3) line(s, x, y, x + w, y, '#0a7a0a', 1.5);
      add(s, 'text', { x: x - 6, y: y + 5, 'text-anchor': 'end' }, v);
    }
    add(s, 'rect', { x: bx, y: top + (4 - Math.max(val, 0)) * u, width: bw, height: Math.abs(val) * u, fill: 'url(#teal)', stroke: '#000', 'stroke-width': 1.5 });
  });
})();

/* swatch comparison and tiles */
document.getElementById('patches').innerHTML = patches.slice(0, 9).map(p =>
  `<div class="patch"><i style="background:${p[2]}"></i><i style="background:${p[1]}"></i><span>${p[0]}</span></div>`).join('');
document.getElementById('tiles').innerHTML = patches.slice(0, 21).map((p, i) =>
  `<button class="tile"><i style="background:${i ? p[1] : '#fff'}"></i><span>${p[0]}</span></button>`).join('');

/* CIE 1931 chromaticity */
(() => {
  const X0 = 30, Y0 = 533, UX = 758.6, UY = 603, px = x => X0 + x * UX, py = y => Y0 - y * UY;
  const locus = [[.1741,.005],[.1714,.0051],[.1644,.0109],[.1566,.0177],[.144,.0297],[.1355,.0399],[.1241,.0578],[.1096,.0868],[.0913,.1327],[.0687,.2007],[.0454,.295],[.0235,.4127],[.0082,.5384],[.0039,.6548],[.0139,.7502],[.0389,.812],[.0743,.8338],[.1142,.8262],[.1547,.8059],[.1929,.7816],[.2296,.7543],[.3016,.6923],[.3731,.6245],[.4441,.5547],[.5125,.4866],[.5752,.4242],[.627,.3725],[.6658,.334],[.6915,.3083],[.719,.2809],[.7347,.2653]];
  const cv = document.getElementById('gamut'), ctx = cv.getContext('2d'), W = cv.width, H = cv.height;
  const off = document.createElement('canvas'); off.width = W; off.height = H;
  const octx = off.getContext('2d');
  const shade = scale => {
    const img = octx.createImageData(W, H);
    for (let j = 0; j < H; j++) for (let i = 0; i < W; i++) {
      const x = (i - X0) / UX, y = Math.max((Y0 - j) / UY, .002), X = x / y, Z = (1 - x - y) / y;
      let r = Math.max(0, 3.2406 * X - 1.5372 - .4986 * Z), g = Math.max(0, -.9689 * X + 1.8758 + .0415 * Z), b = Math.max(0, .0557 * X - .204 + 1.057 * Z);
      const m = Math.max(r, g, b);
      let f = 255 * scale / m;
      f *= 1 - Math.max(0, x - .52) * 2.5;
      f *= 1 - Math.max(0, y - .62) * 1.6;
      const k = (j * W + i) * 4;
      img.data[k] = r * f; img.data[k + 1] = g * f; img.data[k + 2] = b * f; img.data[k + 3] = 255;
    }
    octx.putImageData(img, 0, 0);
  };
  ctx.fillStyle = '#232323';
  ctx.fillRect(X0, 24, 638, 509);
  const outer = new Path2D();
  const P = locus.map(p => [px(p[0]), py(p[1])]);
  outer.moveTo(P[0][0], P[0][1]);
  for (let i = 0; i < P.length - 1; i++) {
    const a = P[Math.max(0, i - 1)], b = P[i], c = P[i + 1], d = P[Math.min(P.length - 1, i + 2)];
    outer.bezierCurveTo(b[0] + (c[0] - a[0]) / 6, b[1] + (c[1] - a[1]) / 6, c[0] - (d[0] - b[0]) / 6, c[1] - (d[1] - b[1]) / 6, c[0], c[1]);
  }
  outer.closePath();
  const tri = new Path2D(`M${px(.64)} ${py(.33)}L${px(.3)} ${py(.6)}L${px(.15)} ${py(.06)}Z`);
  [[outer, .6], [tri, 1]].forEach(([path, k]) => { shade(k); ctx.save(); ctx.clip(path); ctx.drawImage(off, 0, 0); ctx.restore(); });

  const s = document.getElementById('cie');
  add(s, 'text', { x: 335, y: 19, 'text-anchor': 'middle' }, 'CIE 1931 xy');
  add(s, 'rect', { x: X0, y: 24, width: 638, height: 509, fill: 'none', stroke: '#888', 'stroke-width': 2 });
  for (let n = 0; n <= 8; n++) {
    const t = n ? '0,' + n : '0';
    line(s, px(n / 10), Y0, px(n / 10), Y0 + 7, '#aaa');
    line(s, X0 - 6, py(n / 10), X0, py(n / 10), '#aaa');
    add(s, 'text', { x: px(n / 10), y: Y0 + 24, 'text-anchor': 'middle' }, t);
    add(s, 'text', { x: X0 - 6, y: py(n / 10) + 6, 'text-anchor': 'end' }, t);
  }
  const square = (x, y, c) => add(s, 'rect', { x: x - 7.5, y: y - 8, width: 15, height: 16, fill: 'none', stroke: c, 'stroke-width': 2 });
  const dot = (x, y, c) => add(s, 'ellipse', { cx: x, cy: y, rx: 5, ry: 5.3, fill: c, stroke: '#111', 'stroke-width': 1.4 });
  [[.3046,.4925],[.3748,.497],[.4467,.4765],[.474,.4422],[.5117,.409],[.3388,.4306],[.2628,.3643],[.3997,.367],[.3783,.36],[.4612,.3145],[.5372,.3195],[.2065,.2725],[.2477,.2676],[.268,.2554],[.2901,.2228],[.2158,.1946],[.192,.1426],[.3731,.2488]].forEach(p => square(px(p[0]), py(p[1]), '#fff'));
  square(px(.3116), py(.3311), '#000');
  [[.3185,.5064,'#479648'],[.3887,.5135,'#a0bd40'],[.4525,.5014,'#edc91f'],[.4769,.4666,'#e7a22d'],[.5193,.4306,'#db7828'],[.351,.4444,'#5a6d42'],[.2715,.372,'#65bea9'],[.409,.3792,'#735244'],[.3835,.3687,'#c29682'],[.3208,.341,'#777'],[.3208,.3425,'#a8a8a8'],[.452,.3223,'#c45463'],[.5448,.3261,'#af3038'],[.2953,.2847,'#000'],[.2118,.2775,'#0086a5'],[.2553,.2775,'#5f799c'],[.2733,.2653,'#8280b0'],[.2866,.22,'#5d3d6c'],[.2158,.1985,'#4a5ba5'],[.1868,.1421,'#333d96'],[.3655,.2554,'#bb5394']].forEach(p => dot(px(p[0]), py(p[1]), p[2]));

  /* magnified view of the current patch */
  add(s, 'rect', { x: 473, y: 30, width: 192, height: 155, fill: '#2e2e2e' });
  add(s, 'path', { d: 'M476 32H594L543 182H476Z', fill: 'url(#ins-dim)' });
  add(s, 'path', { d: 'M594 32H662V182H543Z', fill: 'url(#ins-lit)' });
  add(s, 'rect', { x: 476, y: 32, width: 186, height: 150, fill: 'none', stroke: '#888', 'stroke-width': 2 });
  square(568, 107, '#fff');
  dot(587, 91, '#0086a5');

  add(s, 'rect', { x: 390, y: 492, width: 274, height: 29, fill: '#323232' });
  add(s, 'text', { x: 527, y: 514, 'text-anchor': 'middle', 'font-size': 20, fill: '#eee' }, 'RGB Triplet: 0, 133, 163');
})();
```
